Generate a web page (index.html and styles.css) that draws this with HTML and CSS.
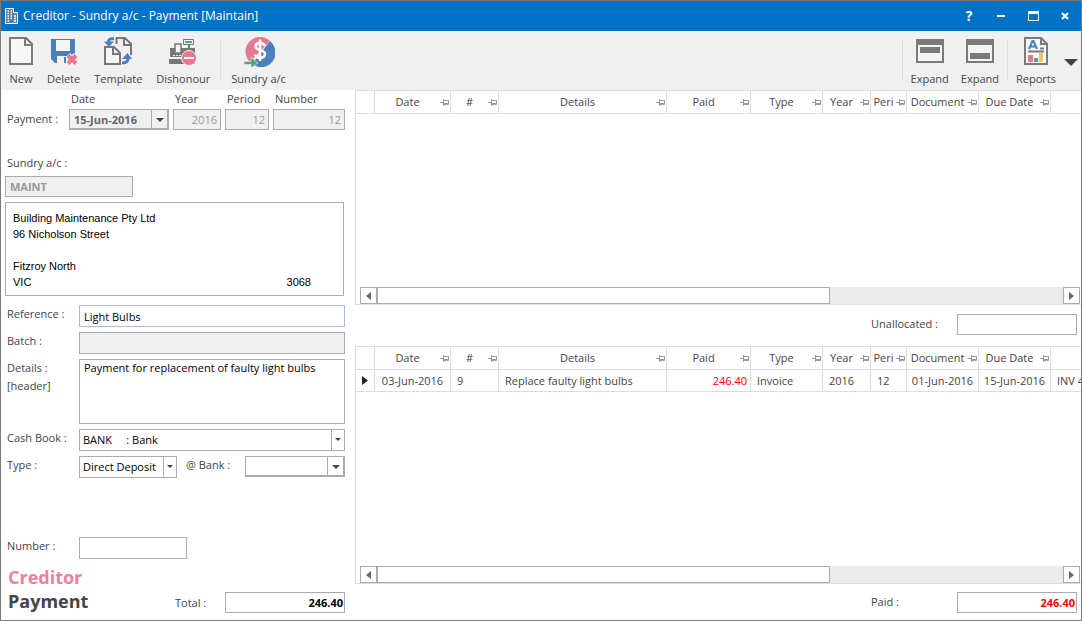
FILE: index.html
```html
<!DOCTYPE html>
<html lang="en">
<head>
  <meta charset="UTF-8">
  <meta name="viewport" content="width=device-width, initial-scale=1.0">
  <title>Creditor - Sundry a/c - Payment [Maintain]</title>
  <link rel="stylesheet" href="styles.css">
</head>
<body>
  <!-- pin glyph used in every column header -->
  <svg class="defs" width="0" height="0" aria-hidden="true">
    <symbol id="pin" viewBox="0 0 9 7">
      <path d="M0 3.5H3M3.5 0V7M4 1.5H8.5V5.5H4" fill="none" stroke="#999" />
      <path d="M4 4.5H8" stroke="#999" />
    </symbol>
  </svg>

  <header class="titlebar">
    <svg class="app-icon" width="14" height="16" viewBox="0 0 14 16">
      <path d="M.5 15.5V.5H8.5V4.5H12.5V15.5Z" fill="#5d7f9c" stroke="#fff" />
      <path d="M2.5 3H4M5.5 3H7M2.5 5.5H4M5.5 5.5H7M2.5 8H4M5.5 8H7M9 8H11M2.5 10.5H4M5.5 10.5H7M9 10.5H11M2.5 13H4M9 13H11" stroke="#fff" stroke-width="1.4" />
      <path d="M0 15.5H13" stroke="#fff" />
    </svg>
    <h1>Creditor - Sundry a/c - Payment [Maintain]</h1>
    <div class="window-buttons">
      <button class="help" aria-label="Help">?</button>
      <button aria-label="Minimize"><svg width="8" height="12"><path d="M0 6H8" stroke="#fff" stroke-width="2" /></svg></button>
      <button aria-label="Maximize"><svg width="11" height="10"><path d="M.5 .5H10.5V9.5H.5Z" fill="none" stroke="#fff" /><path d="M0 1.5H11" stroke="#fff" stroke-width="3" /></svg></button>
      <button aria-label="Close"><svg width="8" height="8"><path d="M1 1L7 7M7 1L1 7" stroke="#fff" stroke-width="2.2" /></svg></button>
    </div>
  </header>

  <nav class="toolbar">
    <div class="tools">
      <button class="tool">
        <svg width="32" height="32" viewBox="0 0 32 32"><path d="M5 3H21L27 9V29H5Z" fill="#f7f7f7" stroke="#7a7a7a" stroke-width="2" /><path d="M20 3V10H27" fill="none" stroke="#7a7a7a" stroke-width="2" /></svg>
        New
      </button>
      <button class="tool">
        <svg width="32" height="32" viewBox="0 0 32 32">
          <path d="M3 4H27V28H7L3 24Z" fill="#4a80bd" />
          <path d="M8 4H22V16H8Z" fill="#f4f4f4" /><path d="M7 4.5H23" stroke="#777" />
          <path d="M9 21H21V29H9Z" fill="#f0f0f0" /><path d="M16 22H18V28H16Z" fill="#4a80bd" />
          <path d="M20 20L28 28M28 20L20 28" stroke="#f0f0f0" stroke-width="6" />
          <path d="M20 20.500L28 28.500M28 20.500L20 28.500" stroke="#e5788c" stroke-width="4" />
        </svg>
        Delete
      </button>
      <button class="tool">
        <svg width="32" height="32" viewBox="0 0 32 32">
          <path d="M14 3H23L29 9V20M14.500 9V3M22 3V10H29" fill="none" stroke="#777" stroke-width="2" />
          <path d="M3 12H12L18 18V29H3Z" fill="#f5f5f5" stroke="#777" stroke-width="2" /><path d="M11 12V19H18" fill="none" stroke="#777" stroke-width="2" />
          <path d="M12 3.500C7 3.500 6 5 6.500 8" fill="none" stroke="#4a80bd" stroke-width="3" /><path d="M2 6.500H12L7 12Z" fill="#4a80bd" />
          <path d="M20 28C25 28 26.500 26 26 22" fill="none" stroke="#4a80bd" stroke-width="3" /><path d="M20 24L25.500 18L30 24Z" fill="#4a80bd" />
        </svg>
        Template
      </button>
      <button class="tool">
        <svg width="32" height="32" viewBox="0 0 32 32">
          <path d="M3 13H28V22H3Z" fill="#777" /><path d="M2 24H28V29H2Z" fill="#777" />
          <path d="M8 9H14V18H8Z" fill="#f5f5f5" stroke="#777" stroke-width="1.500" />
          <path d="M16.500 4.500H26.500V9.500H16.500Z" fill="#f5f5f5" stroke="#777" /><path d="M18 6H25V8H18Z" fill="#57a184" />
          <path d="M22 10V13" stroke="#777" stroke-width="2" /><path d="M6 20.500H15" stroke="#f0f0f0" stroke-dasharray="2 1" />
          <circle cx="22" cy="23" r="7.500" fill="#e5788c" stroke="#f0f0f0" /><path d="M17 23H27" stroke="#fff" stroke-width="2" />
        </svg>
        Dishonour
      </button>
      <span class="divider"></span>
      <button class="tool">
        <svg width="32" height="32" viewBox="0 0 32 32">
          <path d="M27 6A14.500 14.500 0 1 0 7 27Z" fill="#e5788c" /><path d="M27 6A14.500 14.500 0 0 1 9 29Z" fill="#4a80bd" />
          <path d="M22 11C20 7 12.500 7 12.500 11.500C12.500 16 22 14 22 19C22 24 13 24 12 19.500M17 4.500V26" fill="none" stroke="#fff" stroke-width="2.600" />
          <path d="M1 26.500H8V22L15 28L8 33V29.500H1Z" fill="#57a184" stroke="#f0f0f0" stroke-width=".6" />
        </svg>
        Sundry a/c
      </button>
    </div>
    <div class="tools tools-right">
      <span class="divider"></span>
      <button class="tool">
        <svg width="32" height="32" viewBox="0 0 32 32"><path d="M3 5H29V27H3Z" fill="#f5f5f5" stroke="#7a7a7a" stroke-width="2" /><path d="M2 4H30V10H2ZM6 12H26V18H6Z" fill="#7a7a7a" /></svg>
        Expand
      </button>
      <button class="tool">
        <svg width="32" height="32" viewBox="0 0 32 32"><path d="M3 5H29V27H3Z" fill="#f5f5f5" stroke="#7a7a7a" stroke-width="2" /><path d="M2 4H30V10H2ZM6 18H26V24H6Z" fill="#7a7a7a" /></svg>
        Expand
      </button>
      <span class="divider"></span>
      <button class="tool">
        <svg width="32" height="32" viewBox="0 0 32 32">
          <path d="M5 3H21L27 9V29H5Z" fill="#f7f7f7" stroke="#7a7a7a" stroke-width="2" /><path d="M21 3V9H27" fill="none" stroke="#7a7a7a" stroke-width="2" />
          <path d="M9 14L12.500 6H13.500L17 14M10 11.500H16" fill="none" stroke="#4a80bd" stroke-width="2" />
          <path d="M20 13.500H24M8 16.500H24" stroke="#7a7a7a" stroke-width="2" />
          <path d="M8 20H13V27H8Z" fill="#e5788c" /><path d="M14 23H18V27H14Z" fill="#57a184" /><path d="M19 18H23V27H19Z" fill="#eec36c" />
        </svg>
        Reports
      </button>
      <button class="more" aria-label="More"><svg width="14" height="7"><path d="M0 0H14L7 7Z" fill="#444" /></svg></button>
    </div>
  </nav>

  <main>
    <form class="form">
      <div class="payment">
        <label class="col-date" for="date">Date</label>
        <label for="year">Year</label>
        <label for="period">Period</label>
        <label for="docNumber">Number</label>
        <span class="payment-label">Payment :</span>
        <span class="dropdown boxed disabled">
          <select id="date"><option>15-Jun-2016</option></select>
        </span>
        <input id="year" class="locked number" value="2016" readonly>
        <input id="period" class="locked number" value="12" readonly>
        <input id="docNumber" class="locked number" value="12" readonly>
      </div>

      <div class="account">
        <label for="account">Sundry a/c :</label>
        <input id="account" class="locked" value="MAINT" readonly>
        <address>
          <span>Building Maintenance Pty Ltd</span>
          <span>96 Nicholson Street</span>
          <span class="suburb">Fitzroy North</span>
          <span class="state"><span>VIC</span><span>3068</span></span>
        </address>
      </div>

      <div class="fields">
        <label for="reference">Reference :</label>
        <input id="reference" class="focused" value="Light Bulbs">
        <label for="batch">Batch :</label>
        <input id="batch" class="locked" readonly>
        <label for="details">Details :<br>[header]</label>
        <textarea id="details">Payment for replacement of faulty light bulbs</textarea>
        <label for="cashbook">Cash Book :</label>
        <span class="dropdown">
          <select id="cashbook"><option>BANK &nbsp; &nbsp; : Bank</option></select>
        </span>
        <label for="type">Type :</label>
        <div class="type-row">
          <span class="dropdown type">
            <select id="type"><option>Direct Deposit</option></select>
          </span>
          <label for="bank">@ Bank :</label>
          <span class="dropdown boxed bank">
            <select id="bank"><option></option></select>
          </span>
        </div>
      </div>

      <div class="fields cheque">
        <label for="cheque">Number :</label>
        <input id="cheque" class="short">
      </div>

      <div class="summary">
        <h2><span>Creditor</span><br>Payment</h2>
        <label for="total">Total :</label>
        <input id="total" class="amount" value="246.40">
      </div>
    </form>

    <section class="lists">
      <div class="list list-open">
        <table>
          <colgroup><col class="c-mark"><col class="c-date"><col class="c-no"><col class="c-details"><col class="c-paid"><col class="c-type"><col class="c-no"><col class="c-peri"><col class="c-type"><col class="c-type"><col></colgroup>
          <thead>
            <tr>
              <th></th>
              <th><div><span>Date</span><svg><use href="#pin" /></svg></div></th>
              <th><div><span>#</span><svg><use href="#pin" /></svg></div></th>
              <th><div><span>Details</span><svg><use href="#pin" /></svg></div></th>
              <th><div><span>Paid</span><svg><use href="#pin" /></svg></div></th>
              <th><div><span>Type</span><svg><use href="#pin" /></svg></div></th>
              <th><div><span>Year</span><svg><use href="#pin" /></svg></div></th>
              <th><div><span>Peri</span><svg><use href="#pin" /></svg></div></th>
              <th><div><span>Document</span><svg><use href="#pin" /></svg></div></th>
              <th><div><span>Due Date</span><svg><use href="#pin" /></svg></div></th>
              <th></th>
            </tr>
          </thead>
        </table>
        <div class="scrollbar">
          <button aria-label="Scroll left"><svg width="5" height="8"><path d="M5 0V8L0 4Z" fill="#666" /></svg></button>
          <div class="track"><div class="thumb"></div></div>
          <button aria-label="Scroll right"><svg width="5" height="8"><path d="M0 0V8L5 4Z" fill="#666" /></svg></button>
        </div>
      </div>

      <div class="list-total">
        <label for="unallocated">Unallocated :</label>
        <input id="unallocated" class="amount">
      </div>

      <div class="list list-paid">
        <table>
          <colgroup><col class="c-mark"><col class="c-date"><col class="c-no"><col class="c-details"><col class="c-paid"><col class="c-type"><col class="c-no"><col class="c-peri"><col class="c-type"><col class="c-type"><col></colgroup>
          <thead>
            <tr>
              <th></th>
              <th><div><span>Date</span><svg><use href="#pin" /></svg></div></th>
              <th><div><span>#</span><svg><use href="#pin" /></svg></div></th>
              <th><div><span>Details</span><svg><use href="#pin" /></svg></div></th>
              <th><div><span>Paid</span><svg><use href="#pin" /></svg></div></th>
              <th><div><span>Type</span><svg><use href="#pin" /></svg></div></th>
              <th><div><span>Year</span><svg><use href="#pin" /></svg></div></th>
              <th><div><span>Peri</span><svg><use href="#pin" /></svg></div></th>
              <th><div><span>Document</span><svg><use href="#pin" /></svg></div></th>
              <th><div><span>Due Date</span><svg><use href="#pin" /></svg></div></th>
              <th></th>
            </tr>
          </thead>
          <tbody>
            <tr>
              <td class="mark"><svg width="6" height="9"><path d="M0 0V9L6 4.500Z" fill="#222" /></svg></td>
              <td class="date">03-Jun-2016</td>
              <td>9</td>
              <td>Replace faulty light bulbs</td>
              <td class="paid">246.40</td>
              <td>Invoice</td>
              <td>2016</td>
              <td>12</td>
              <td class="date">01-Jun-2016</td>
              <td class="date">15-Jun-2016</td>
              <td>INV 4</td>
            </tr>
          </tbody>
        </table>
        <div class="scrollbar">
          <button aria-label="Scroll left"><svg width="5" height="8"><path d="M5 0V8L0 4Z" fill="#666" /></svg></button>
          <div class="track"><div class="thumb"></div></div>
          <button aria-label="Scroll right"><svg width="5" height="8"><path d="M0 0V8L5 4Z" fill="#666" /></svg></button>
        </div>
      </div>

      <div class="list-total">
        <label for="paid">Paid :</label>
        <input id="paid" class="amount red" value="246.40">
      </div>
    </section>
  </main>
</body>
</html>
```
FILE: styles.css
```css
* {
  box-sizing: border-box;
}
body {
  margin: 0;
  min-height: 100vh;
  display: flex;
  flex-direction: column;
  border: 1px solid #7b7b7b;
  background: #fff;
  color: #444;
  font-family: "Open Sans", "Noto Sans", sans-serif;
  font-size: 11px;
  line-height: 16px;
}
.defs {
  position: absolute;
}
button, input, select, textarea {
  font: inherit;
  color: inherit;
  border-radius: 0;
}
button {
  border: none;
  background: none;
  padding: 0;
}

/* Title bar */
.titlebar {
  display: flex;
  align-items: center;
  gap: 4px;
  height: 30px;
  padding-left: 4px;
  background: #0072c6;
  color: #fff;
}
.titlebar h1 {
  margin: 0;
  font-size: 12px;
  font-weight: normal;
}
.window-buttons {
  display: flex;
  margin-left: auto;
}
.window-buttons button {
  display: flex;
  align-items: center;
  justify-content: center;
  width: 32px;
  height: 28px;
}
.window-buttons .help {
  font-size: 14px;
  font-weight: bold;
}

/* Toolbar */
.toolbar {
  display: flex;
  justify-content: space-between;
  height: 59px;
  padding: 4px 3px 2px 8px;
  background: #f0f0f0;
}
.tools {
  display: flex;
  gap: 14px;
}
.tools-right {
  gap: 12px;
}
.tool {
  display: flex;
  flex-direction: column;
  align-items: center;
  gap: 4px;
}
.tool svg {
  margin: 0 -4px;
}
.divider {
  width: 1px;
  height: 42px;
  margin: 4px -4px 0;
  background: #ddd;
}
.more {
  margin-left: -4px;
}

/* Form */
main {
  flex: 1;
  display: grid;
  grid-template-columns: 354px 1fr;
}
.form {
  display: flex;
  flex-direction: column;
  padding: 1px 10px 7px 4px;
}
input, textarea, select {
  width: 100%;
  min-width: 0;
  height: 22px;
  margin: 0;
  padding: 0 4px;
  border: 1px solid #ababab;
  background: #fff;
  color: #000;
  outline: none;
}
.locked {
  background: #f0f0f0;
  color: #999;
  font-weight: bold;
}
.number {
  padding: 0 3px;
  text-align: right;
  font-weight: normal;
}
.payment {
  display: grid;
  grid-template-columns: 60px 100px 48px 44px 72px;
  gap: 2px 4px;
}
.payment label {
  padding-left: 2px;
}
.payment .col-date {
  grid-column: 2;
}
.payment-label {
  padding-left: 2px;
  line-height: 20px;
}
.payment input, .payment select, .account input, .boxed select {
  height: 21px;
}
.account {
  display: flex;
  flex-direction: column;
  gap: 5px;
  margin-top: 25px;
}
.account label {
  padding-left: 2px;
}
.account input {
  width: 128px;
}
address {
  display: flex;
  flex-direction: column;
  margin-right: 1px;
  padding: 7px 32px 5px 7px;
  border: 1px solid #ababab;
  color: #000;
  font-family: "Liberation Sans", Arial, sans-serif;
  font-style: normal;
}
.suburb {
  margin-top: 16px;
}
.state {
  display: flex;
  justify-content: space-between;
}
.fields {
  display: grid;
  grid-template-columns: 74px 1fr;
  gap: 5px 0;
  margin-top: 9px;
}
.fields label {
  padding-left: 2px;
  line-height: 18px;
}
.focused {
  border-color: #a3bde3;
}
textarea {
  display: block;
  height: 65px;
  resize: none;
}

/* Drop-downs: native select with its own arrow cell */
.dropdown {
  position: relative;
  display: block;
}
.dropdown select {
  display: block;
  appearance: none;
  padding: 0 14px 0 3px;
  background: linear-gradient(#ababab, #ababab) right 12px top / 1px 100% no-repeat #fff;
}
.dropdown::after {
  content: "";
  position: absolute;
  right: 4px;
  top: 9px;
  border: 3px solid transparent;
  border-top-color: #444;
  pointer-events: none;
}
.dropdown.boxed::after {
  right: 5px;
  border-width: 4px;
  border-top-color: #444;
}
.boxed select {
  background-position: right 16px top;
  box-shadow: inset -1px -1px #ababab;
}
.disabled select {
  padding-left: 4px;
  background-color: #f0f0f0;
  color: #666;
  font-weight: bold;
}
.type-row {
  display: flex;
}
.type {
  width: 98px;
}
.type-row label {
  padding-left: 9px;
}
.bank {
  width: 100px;
  margin-left: auto;
}
.cheque {
  margin-top: auto;
}
.short {
  width: 108px;
}
.summary {
  display: flex;
  align-items: flex-end;
  margin-top: 6px;
}
.summary h2 {
  width: 167px;
  margin: 0;
  padding-left: 3px;
  font-size: 18px;
  line-height: 24px;
}
.summary h2 span {
  color: #e8829a;
}
.summary label, .list-total label {
  line-height: 20px;
  padding-left: 3px;
}
.amount {
  width: 120px;
  height: 21px;
  margin-left: auto;
  padding: 0 1px;
  text-align: right;
  font-weight: bold;
}
.red {
  color: #f00;
}

/* Lists */
.lists {
  display: flex;
  flex-direction: column;
  min-width: 0;
}
.list {
  display: flex;
  flex-direction: column;
  border: 1px solid #ddd;
  border-right: none;
}
.list-open {
  flex: 0 0 215px;
}
.list-paid {
  flex: 1;
}
table {
  width: 100%;
  table-layout: fixed;
  border-collapse: separate;
  border-spacing: 0;
}
.c-mark { width: 19px; }
.c-date { width: 76px; }
.c-no { width: 48px; }
.c-details { width: 168px; }
.c-paid { width: 84px; }
.c-type { width: 72px; }
.c-peri { width: 36px; }
th, td {
  height: 22px;
  padding: 0 0 0 6px;
  border-right: 1px solid #ddd;
  border-bottom: 1px solid #ddd;
  text-align: left;
  font-weight: normal;
  white-space: nowrap;
  overflow: hidden;
}
th {
  height: 23px;
  padding: 0 1px 0 0;
}
th:last-child, td:last-child {
  border-right: none;
}
th div {
  display: flex;
  align-items: center;
}
th span {
  flex: 1;
  text-align: center;
}
th svg {
  flex: none;
  width: 9px;
  height: 7px;
}
.mark svg {
  display: block;
}
.date {
  padding: 0;
  text-align: center;
}
.paid {
  padding-right: 3px;
  text-align: right;
  color: #f00;
}
.scrollbar {
  display: flex;
  height: 17px;
  margin-top: auto;
  padding: 0 1px 0 4px;
}
.scrollbar button {
  display: flex;
  align-items: center;
  justify-content: center;
  width: 17px;
  border: 1px solid #ababab;
}
.track {
  flex: 1;
  background: #ebebeb;
}
.thumb {
  width: 66%;
  height: 100%;
  border: 1px solid #ababab;
  background: #fff;
}
.list-total {
  display: flex;
  justify-content: flex-end;
  padding: 9px 4px 11px;
}
.list-total:last-child {
  padding: 8px 4px 7px;
}
.list-total label {
  width: 89px;
}
.list-total .amount {
  margin-left: 0;
}
```
